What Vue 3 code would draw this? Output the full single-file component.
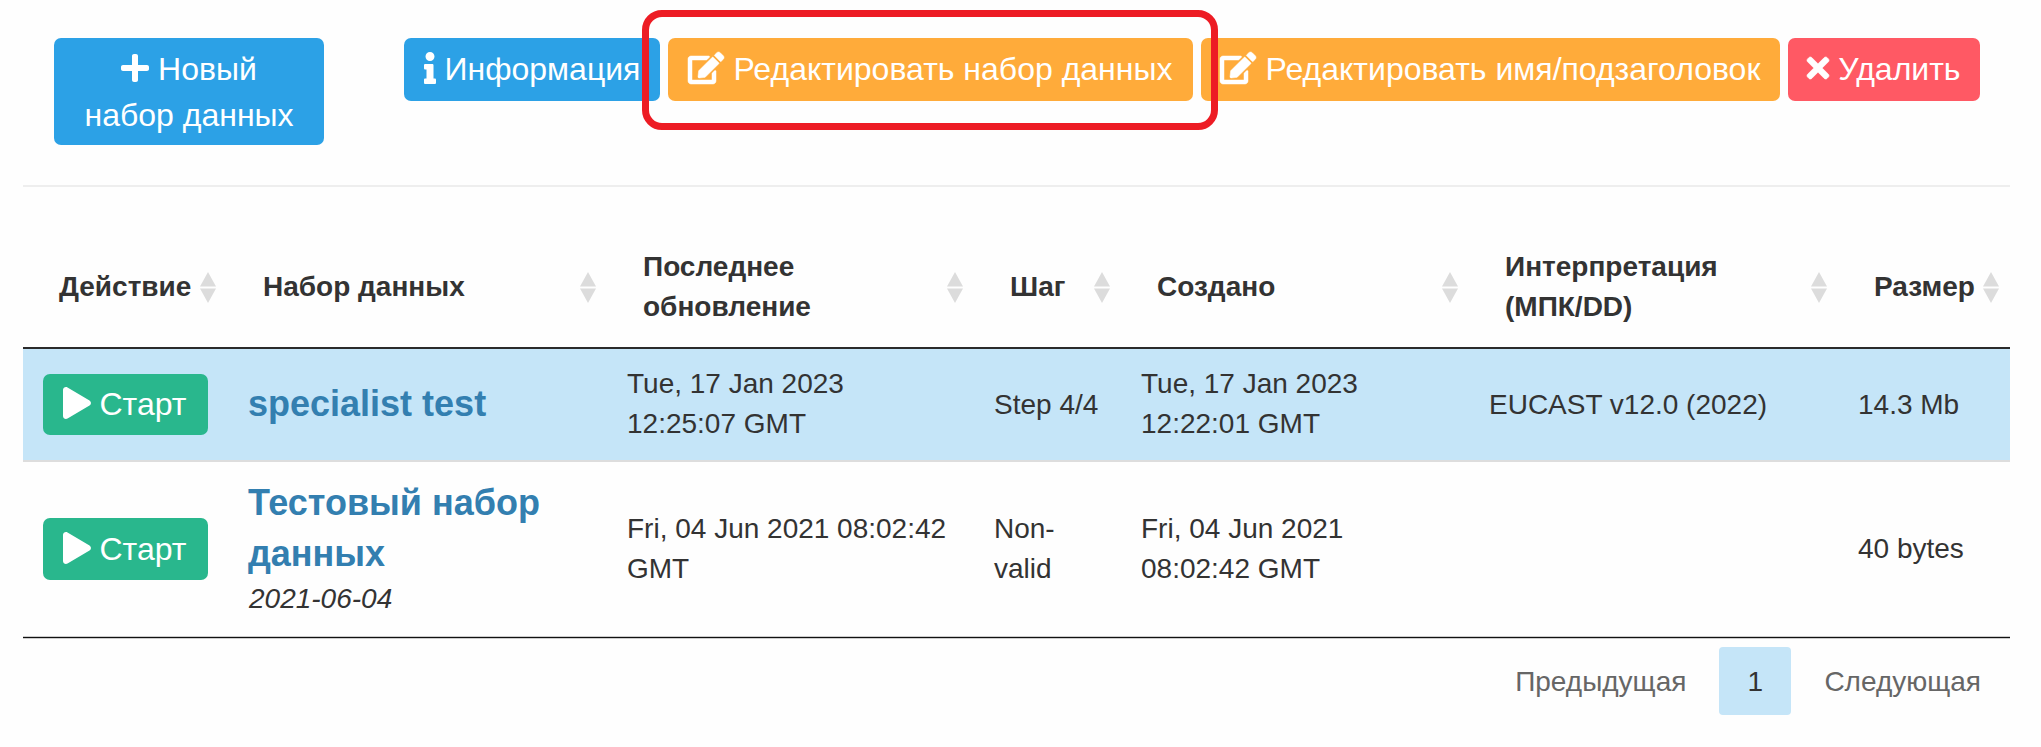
<script setup>
const icons = {
  plus: { w: 448, d: 'M416 208H272V64c0-17.67-14.33-32-32-32h-32c-17.67 0-32 14.33-32 32v144H32c-17.67 0-32 14.33-32 32v32c0 17.67 14.33 32 32 32h144v144c0 17.67 14.33 32 32 32h32c17.67 0 32-14.33 32-32V304h144c17.67 0 32-14.33 32-32v-32c0-17.67-14.33-32-32-32z' },
  info: { w: 192, d: 'M20 424.229h20V279.771H20c-11.046 0-20-8.954-20-20V212c0-11.046 8.954-20 20-20h112c11.046 0 20 8.954 20 20v212.229h20c11.046 0 20 8.954 20 20V492c0 11.046-8.954 20-20 20H20c-11.046 0-20-8.954-20-20v-47.771c0-11.046 8.954-20 20-20zM96 0C56.235 0 24 32.235 24 72s32.235 72 72 72 72-32.235 72-72S135.764 0 96 0z' },
  edit: { w: 576, d: 'M402.6 83.2l90.2 90.2c3.8 3.8 3.8 10 0 13.8L274.4 405.6l-92.8 10.3c-12.4 1.4-22.9-9.1-21.5-21.5l10.3-92.8L388.8 83.2c3.8-3.8 10-3.8 13.8 0zm162-22.9l-48.8-48.8c-15.2-15.2-39.9-15.2-55.2 0l-35.4 35.4c-3.8 3.8-3.8 10 0 13.8l90.2 90.2c3.8 3.8 10 3.8 13.8 0l35.4-35.4c15.2-15.3 15.2-40 0-55.2zM384 346.2V448H64V128h229.8c3.2 0 6.2-1.3 8.5-3.5l40-40c7.6-7.6 2.2-20.5-8.5-20.5H48C21.5 64 0 85.5 0 112v352c0 26.5 21.5 48 48 48h352c26.5 0 48-21.5 48-48V306.2c0-10.7-12.9-16-20.5-8.5l-40 40c-2.2 2.3-3.5 5.3-3.5 8.5z' },
  times: { w: 352, d: 'M242.72 256l100.07-100.07c12.28-12.28 12.28-32.19 0-44.48l-22.24-22.24c-12.28-12.28-32.19-12.28-44.48 0L176 189.28 75.93 89.21c-12.28-12.28-32.19-12.28-44.48 0L9.21 111.45c-12.28 12.28-12.28 32.19 0 44.48L109.28 256 9.21 356.07c-12.28 12.28-12.28 32.19 0 44.48l22.24 22.24c12.28 12.28 32.2 12.28 44.48 0L176 322.72l100.07 100.07c12.28 12.28 32.2 12.28 44.48 0l22.24-22.24c12.28-12.28 12.28-32.19 0-44.48L242.72 256z' },
  play: { w: 448, d: 'M424.4 214.7L72.4 6.6C43.8-10.3 0 6.1 0 47.9V464c0 37.5 40.7 60.1 72.4 41.3l352-208c31.4-18.5 31.5-64.1 0-82.6z' }
}

const actions = [
  { icon: 'info', label: 'Информация', kind: 'blue info' },
  { icon: 'edit', label: 'Редактировать набор данных', kind: 'orange edit-set', marked: true },
  { icon: 'edit', label: 'Редактировать имя/подзаголовок', kind: 'orange edit-name' },
  { icon: 'times', label: 'Удалить', kind: 'red remove' }
]

const columns = [
  { key: 'action', lines: ['Действие'] },
  { key: 'name', lines: ['Набор данных'] },
  { key: 'updated', lines: ['Последнее', 'обновление'] },
  { key: 'step', lines: ['Шаг'] },
  { key: 'created', lines: ['Создано'] },
  { key: 'interp', lines: ['Интерпретация', '(МПК/DD)'] },
  { key: 'size', lines: ['Размер'] }
]

const rows = [
  {
    name: ['specialist test'], note: '', selected: true,
    cells: [['Tue, 17 Jan 2023', '12:25:07 GMT'], ['Step 4/4'], ['Tue, 17 Jan 2023', '12:22:01 GMT'], ['EUCAST v12.0 (2022)'], ['14.3 Mb']]
  },
  {
    name: ['Тестовый набор', 'данных'], note: '2021-06-04', selected: false,
    cells: [['Fri, 04 Jun 2021 08:02:42', 'GMT'], ['Non-', 'valid'], ['Fri, 04 Jun 2021', '08:02:42 GMT'], [], ['40 bytes']]
  }
]
</script>

<template>
  <main class="page">
    <header class="toolbar">
      <button class="btn blue create">
        <svg class="icon plus" :viewBox="`0 0 ${icons.plus.w} 512`"><path :d="icons.plus.d" /></svg>
        Новый<br>набор данных
      </button>
      <div class="actions">
        <div v-for="a in actions" :key="a.label" class="slot">
          <button class="btn" :class="a.kind">
            <svg class="icon" :class="a.icon" :viewBox="`0 0 ${icons[a.icon].w} 512`"><path :d="icons[a.icon].d" /></svg>
            {{ a.label }}
          </button>
          <span v-if="a.marked" class="marker"></span>
        </div>
      </div>
    </header>

    <table class="grid">
      <colgroup>
        <col v-for="c in columns" :key="c.key" :class="'c-' + c.key">
      </colgroup>
      <thead>
        <tr>
          <th v-for="c in columns" :key="c.key">
            <div class="head">
              <span><span v-for="l in c.lines" :key="l" class="line">{{ l }}</span></span>
              <svg class="sort" viewBox="0 0 16 31"><path d="M8 0L16 14.5H0zM0 16.5H16L8 31z" /></svg>
            </div>
          </th>
        </tr>
      </thead>
      <tbody>
        <tr v-for="r in rows" :key="r.name[0]" :class="{ selected: r.selected }">
          <td class="action-cell">
            <button class="btn green start">
              <svg class="icon play" :viewBox="`0 0 ${icons.play.w} 512`"><path :d="icons.play.d" /></svg>
              Старт
            </button>
          </td>
          <td class="name-cell">
            <a class="name"><span v-for="l in r.name" :key="l" class="line">{{ l }}</span></a>
            <em v-if="r.note" class="line">{{ r.note }}</em>
          </td>
          <td v-for="(c, i) in r.cells" :key="i" :class="{ double: c.length > 1 }">
            <span v-for="l in c" :key="l" class="line">{{ l }}</span>
          </td>
        </tr>
      </tbody>
    </table>

    <nav class="pager">
      <a class="page-link">Предыдущая</a>
      <a class="page-link current">1</a>
      <a class="page-link">Следующая</a>
    </nav>
  </main>
</template>

<style>
body {
  background: #fefefe;
}
</style>

<style scoped>
.page {
  box-sizing: border-box;
  width: 2041px;
  height: 747px;
  padding: 0 31px 0 23px;
  overflow: hidden;
  font-family: "Liberation Sans", Arial, sans-serif;
  font-size: 28px;
  line-height: 40px;
  color: #333;
}
.toolbar {
  box-sizing: border-box;
  display: flex;
  justify-content: space-between;
  align-items: flex-start;
  height: 187px;
  padding: 38px 30px 0 31px;
  border-bottom: 2px solid #eee;
}
.actions {
  display: flex;
  gap: 8px;
}
.slot {
  position: relative;
}
.btn {
  box-sizing: border-box;
  display: block;
  height: 62.5px;
  margin: 0;
  padding: 9px 0 7px;
  border: 0;
  border-radius: 7px;
  font: 32px/45.7px "Liberation Sans", Arial, sans-serif;
  color: #fff;
  text-align: center;
  white-space: nowrap;
}
.blue { background: #2ca1e6; }
.orange { background: #ffab3a; }
.red { background: #ff5964; }
.green { background: #29b78d; }
.create { width: 270px; height: 107px; }
.info { width: 256px; }
.edit-set { width: 525px; }
.edit-name { width: 579px; }
.remove { width: 192px; }
.start { width: 165px; height: 61.5px; padding: 8px 1px 7px 0; }
.icon {
  height: 32px;
  vertical-align: -4px;
  fill: currentColor;
  overflow: visible;
}
.icon.plus, .icon.play { width: 28px; }
svg.icon.info { width: 12px; }
.icon.edit {
  width: 36px;
  margin-left: -1px;
  margin-right: 1px;
  stroke: currentColor;
  stroke-width: 8;
}
.icon.times {
  width: 22px;
  stroke: currentColor;
  stroke-width: 10;
}
.marker {
  position: absolute;
  z-index: 1;
  top: -28px;
  left: -26px;
  box-sizing: border-box;
  width: 576px;
  height: 120px;
  border: 7px solid #ed1c24;
  border-radius: 20px;
}
.grid {
  width: 1987px;
  margin-top: 39px;
  table-layout: fixed;
  border-collapse: separate;
  border-spacing: 0;
  border-bottom: 1px solid #111;
  box-shadow: 0 1px #ccc;
}
.c-action { width: 204px; }
.c-name { width: 380px; }
.c-updated { width: 367px; }
.c-step { width: 147px; }
.c-created { width: 348px; }
.c-interp { width: 369px; }
.c-size { width: 172px; }
.grid th {
  box-sizing: border-box;
  height: 123px;
  padding: 1px 11px 0 36px;
  border-bottom: 2px solid #2b2b2b;
  text-align: left;
}
.head {
  display: flex;
  align-items: center;
  justify-content: space-between;
}
.sort {
  flex: none;
  width: 16px;
  height: 31px;
  margin-top: 1px;
  fill: #dcdcdc;
}
.line {
  display: block;
  white-space: nowrap;
}
.grid td {
  box-sizing: border-box;
  height: 175px;
  padding: 0 0 0 20px;
  border-bottom: 1px solid #ccc;
  vertical-align: middle;
}
.grid .selected td {
  height: 113px;
  background: #c5e5f8;
  border-bottom: 2px solid #ddd;
}
.grid .action-cell {
  padding-left: 19.5px;
}
.grid .name-cell {
  padding: 0 0 2px 21px;
}
.grid .selected .double {
  padding-bottom: 2px;
}
.name {
  display: block;
  font-size: 36px;
  font-weight: bold;
  line-height: 51.4px;
  color: #337fb0;
}
.name + .line {
  padding-left: 1px;
}
.pager {
  display: flex;
  justify-content: flex-end;
  margin: 9px 0 0;
  padding-right: 29px;
  gap: 33px;
}
.page-link {
  height: 67px;
  padding-top: 1px;
  line-height: 67px;
  color: #666;
}
.current {
  width: 72px;
  border-radius: 4px;
  background: #c5e5f8;
  color: #333;
  text-align: center;
}
</style>
